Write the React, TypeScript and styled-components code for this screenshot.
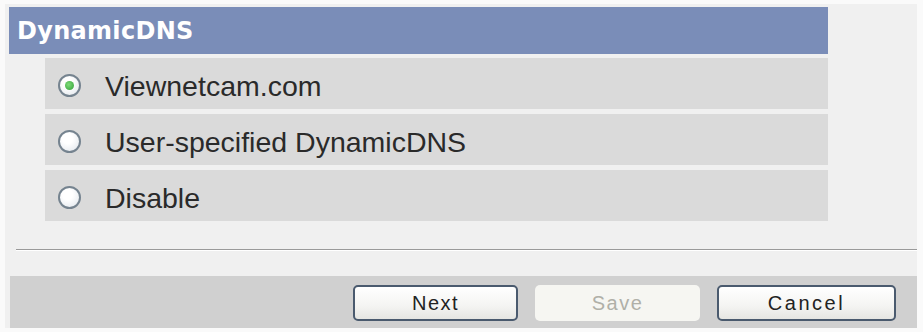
import { createGlobalStyle, styled } from "styled-components";

const GlobalStyle = createGlobalStyle`
  html, body {
    margin: 0;
    padding: 0;
    background: #fafafa;
  }
  body {
    font-family: "Liberation Sans", Arial, sans-serif;
  }
`;

const options = [
  { label: "Viewnetcam.com", checked: true },
  { label: "User-specified DynamicDNS", checked: false },
  { label: "Disable", checked: false },
];

const App = () => {
  return (
    <>
      <GlobalStyle />
      <Page>
        <Panel>
          <Section>
            <Header>DynamicDNS</Header>
            <Options>
              {options.map((o) => (
                <Row key={o.label}>
                  <Radio $checked={o.checked} />
                  <Label>{o.label}</Label>
                </Row>
              ))}
            </Options>
          </Section>
          <Separator />
          <ButtonBar>
            <Button>Next</Button>
            <Button disabled>Save</Button>
            <Button>Cancel</Button>
          </ButtonBar>
        </Panel>
      </Page>
    </>
  );
};

export default App;

const Page = styled.div`
  width: 923px;
  height: 332px;
  padding: 4px 6px 4px 5px;
  box-sizing: border-box;
`;

const Panel = styled.div`
  width: 912px;
  height: 324px;
  background: #f0f0f0;
  padding-top: 3px;
  box-sizing: border-box;
  display: flex;
  flex-direction: column;
`;

const Section = styled.div`
  width: 819px;
  margin-left: 4px;
`;

const Header = styled.div`
  height: 47px;
  background: #7a8db8;
  color: #ffffff;
  font-family: "DejaVu Sans", Verdana, sans-serif;
  font-weight: bold;
  font-size: 24px;
  display: flex;
  align-items: center;
  padding-left: 8px;
  letter-spacing: 0.3px;
`;

const Options = styled.div`
  margin-top: 4px;
  margin-left: 36px;
  display: flex;
  flex-direction: column;
  gap: 5px;
`;

const Row = styled.div`
  height: 51px;
  background: #dadada;
  display: flex;
  align-items: center;
  padding-left: 13px;
`;

const Radio = styled.span<{ $checked: boolean }>`
  width: 19px;
  height: 19px;
  border-radius: 50%;
  border: 2px solid #75838f;
  background: radial-gradient(circle at 40% 35%, #ffffff 30%, #dfe4ea 100%);
  position: relative;
  flex-shrink: 0;
  margin-top: 3px;

  &::after {
    content: "";
    display: ${(p) => (p.$checked ? "block" : "none")};
    position: absolute;
    left: 50%;
    top: 50%;
    width: 9px;
    height: 9px;
    margin: -4.5px 0 0 -4.5px;
    border-radius: 50%;
    background: radial-gradient(circle at 40% 40%, #7fdc7a 0%, #2f9e36 100%);
  }
`;

const Label = styled.span`
  margin-left: 24px;
  padding-top: 5px;
  font-size: 28.5px;
  color: #2a2a2a;
`;

const Separator = styled.div`
  margin-top: 28px;
  margin-left: 11px;
  height: 1px;
  background: #9a9a9a;
  border-bottom: 1px solid #ffffff;
`;

const ButtonBar = styled.div`
  margin-top: 25px;
  margin-left: 5px;
  height: 52px;
  background: #d0d0d0;
  display: flex;
  align-items: center;
  justify-content: flex-end;
  gap: 17px;
  padding-right: 21px;
`;

const Button = styled.button`
  width: 165px;
  height: 36px;
  margin-top: 2px;
  border: 2px solid #4a5a6e;
  border-radius: 5px;
  background: linear-gradient(#ffffff, #f4f4f2 60%, #e6e6e2);
  font-family: "Liberation Sans", Arial, sans-serif;
  font-size: 20px;
  letter-spacing: 1.5px;
  color: #222222;
  padding: 0;

  &:last-child {
    width: 179px;
    letter-spacing: 2.5px;
  }

  &:disabled {
    border-color: transparent;
    background: #f6f6f2;
    color: #b0b0a8;
  }
`;
